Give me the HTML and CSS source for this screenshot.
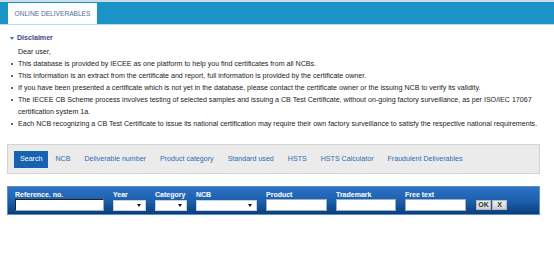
FILE: index.html
```html
<!DOCTYPE html>
<html lang="en">
<head>
    <meta charset="UTF-8">
    <title>Online Deliverables</title>
    <link rel="stylesheet" href="styles.css">
</head>
<body>
    <div class="topbar">
        <div class="tab">ONLINE DELIVERABLES</div>
    </div>

    <div class="disclaimer">
        <div class="disc-title"><span class="caret"></span>Disclaimer</div>
        <p class="greeting">Dear user,</p>
        <ul class="notes">
            <li>This database is provided by IECEE as one platform to help you find certificates from all NCBs.</li>
            <li>This information is an extract from the certificate and report, full information is provided by the certificate owner.</li>
            <li>If you have been presented a certificate which is not yet in the database, please contact the certificate owner or the issuing NCB to verify its validity.</li>
            <li>The IECEE CB Scheme process involves testing of selected samples and issuing a CB Test Certificate, without on-going factory surveillance, as per ISO/IEC 17067 certification system 1a.</li>
            <li>Each NCB recognizing a CB Test Certificate to issue its national certification may require their own factory surveillance to satisfy the respective national requirements.</li>
        </ul>
    </div>

    <div class="nav">
        <a class="nav-btn active" href="#">Search</a>
        <a class="nav-btn" href="#">NCB</a>
        <a class="nav-btn" href="#">Deliverable number</a>
        <a class="nav-btn" href="#">Product category</a>
        <a class="nav-btn" href="#">Standard used</a>
        <a class="nav-btn" href="#">HSTS</a>
        <a class="nav-btn" href="#">HSTS Calculator</a>
        <a class="nav-btn" href="#">Fraudulent Deliverables</a>
    </div>

    <form class="searchbar" onsubmit="return false;">
        <div class="field w-ref">
            <label>Reference. no.</label>
            <input type="text" class="text-input ref-input">
        </div>
        <div class="field w-year">
            <label>Year</label>
            <div class="select"><span class="arrow"></span></div>
        </div>
        <div class="field w-cat">
            <label>Category</label>
            <div class="select"><span class="arrow"></span></div>
        </div>
        <div class="field w-ncb">
            <label>NCB</label>
            <div class="select"><span class="arrow"></span></div>
        </div>
        <div class="field w-txt">
            <label>Product</label>
            <input type="text" class="text-input">
        </div>
        <div class="field w-tm">
            <label>Trademark</label>
            <input type="text" class="text-input">
        </div>
        <div class="field w-txt">
            <label>Free text</label>
            <input type="text" class="text-input">
        </div>
        <div class="actions">
            <button class="small-btn">OK</button>
            <button class="small-btn">X</button>
        </div>
    </form>
</body>
</html>
```

FILE: styles.css
```css
:root {
    --bar-blue: #1b93c7;
    --link: #2e6cb4;
    --navy-text: #3d4a8e;
    --text: #222;
}

body {
    margin: 0;
    font-family: 'Liberation Sans', Arial, sans-serif;
    font-size: 7.1px;
    color: var(--text);
    background: #fff;
}

.topbar {
    height: 22px;
    background: var(--bar-blue);
    border-top: 2px solid #c9dde8;
    border-bottom: 1px solid #b5dbec;
    display: flex;
    align-items: flex-end;
}

.tab {
    margin-left: 8px;
    width: 89px;
    height: 21px;
    background: #fff;
    color: #4a6d9c;
    font-size: 6.6px;
    display: flex;
    align-items: center;
    justify-content: center;
}

.disclaimer {
    padding-left: 10px;
    margin-top: 7px;
    line-height: 12px;
}

.disc-title {
    color: var(--navy-text);
    font-weight: bold;
    display: flex;
    align-items: center;
    margin-bottom: 2px;
}

.caret {
    width: 0;
    height: 0;
    border-left: 2.5px solid transparent;
    border-right: 2.5px solid transparent;
    border-top: 3px solid #3a78c0;
    margin-right: 3px;
}

.greeting {
    margin: 0 0 0 8px;
}

.notes {
    margin: 0;
    padding: 0 0 0 8px;
    list-style: none;
}

.notes li {
    position: relative;
}

.notes li::before {
    content: '';
    position: absolute;
    left: -7px;
    top: 5px;
    width: 2px;
    height: 2px;
    border-radius: 50%;
    background: #333;
}

.nav {
    margin: 14px 14px 0 7px;
    height: 28px;
    background: #ebebeb;
    border: 1px solid #d3d3d3;
    display: flex;
    align-items: center;
    padding-left: 6px;
}

.nav-btn {
    font-size: 7.1px;
    color: var(--link);
    text-decoration: none;
    padding: 0 7px;
    line-height: 17px;
}

.nav-btn.active {
    background: #1763b1;
    color: #fff;
    padding: 0 6px;
}

.searchbar {
    margin: 12px 14px 0 7px;
    height: 29px;
    box-sizing: border-box;
    padding: 3px 0 0 7px;
    background: linear-gradient(#2e74c6, #1a5eaa 55%, #0b3e7a);
    border: 1px solid #5b8fcc;
    display: flex;
    gap: 9px;
}

.field {
    display: flex;
    flex-direction: column;
}

.field label {
    color: #fff;
    font-weight: bold;
    font-size: 7px;
    line-height: 9px;
}

.w-ref { width: 89px; }
.w-year { width: 33px; }
.w-cat { width: 32px; }
.w-ncb { width: 61px; }
.w-txt { width: 61px; }
.w-tm { width: 60px; }

.text-input {
    box-sizing: border-box;
    width: 100%;
    height: 12px;
    margin: 0;
    padding: 0;
    border: 1px solid #9ab0c8;
    background: #fff;
}

.ref-input {
    border-color: #222 #9ab0c8 #9ab0c8 #222;
}

.select {
    box-sizing: border-box;
    width: 100%;
    height: 11px;
    margin-top: 1px;
    background: #fff;
    border: 1px solid #c8d2dc;
    display: flex;
    align-items: center;
    justify-content: flex-end;
    padding-right: 4px;
}

.arrow {
    width: 0;
    height: 0;
    border-left: 2px solid transparent;
    border-right: 2px solid transparent;
    border-top: 3px solid #111;
}

.actions {
    display: flex;
    gap: 1px;
    margin-left: 1px;
    padding-top: 10px;
}

.small-btn {
    width: 15px;
    height: 10px;
    padding: 0;
    border: 1px solid #b8b8b8;
    background: linear-gradient(#eeeeee, #cfcfcf);
    color: #333;
    font-family: 'Liberation Sans', Arial, sans-serif;
    font-weight: bold;
    font-size: 7px;
    line-height: 8px;
}
```
